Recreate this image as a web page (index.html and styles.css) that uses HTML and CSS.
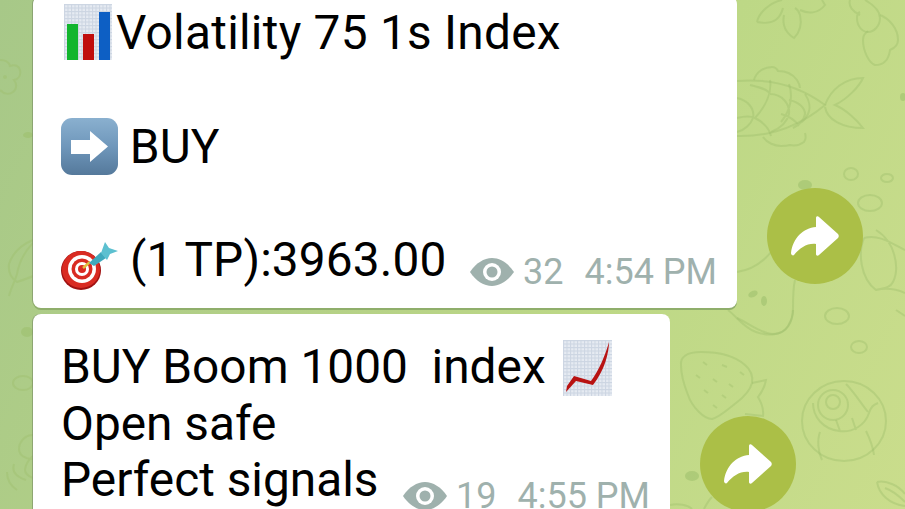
FILE: index.html
```html
<!DOCTYPE html>
<html lang="en">
<head>
  <meta charset="UTF-8">
  <title>Channel</title>
  <link rel="stylesheet" href="styles.css">
</head>
<body>
  <svg class="doodles" width="905" height="509" viewBox="0 0 905 509" fill="none" aria-hidden="true">
    <defs>
      <pattern id="grid" width="3.500" height="3.500" patternUnits="userSpaceOnUse">
        <rect width="3.500" height="3.500" fill="#e6ebf2"/>
        <path d="M0 .5h3.500M.5 0v3.500" stroke="#ccd5e2" stroke-width="1"/>
      </pattern>
      <linearGradient id="blueKey" x1="0" y1="0" x2="0" y2="1">
        <stop offset="0" stop-color="#8ab0cf"/>
        <stop offset=".5" stop-color="#6f97bb"/>
        <stop offset="1" stop-color="#55799b"/>
      </linearGradient>
    </defs>
    <g class="line">
      <!-- top leaves -->
      <path d="M757 22c2-10 14-20 25-22M757 22c10 2 22 2 26-14"/>
      <path d="M784 15c-2 10 2 18 10 23 6-6 8-14 6-23-1-3-3-6-5-7"/>
      <path d="M800 10c8 4 18 4 25-5l-3-5"/>
      <path d="M850 0c-2 6 3 12 10 15M865 0c7 4 15 10 15 18 0 8-6 14-12 14-6 0-11-6-11-14 0-3 1-5 3-6"/>
      <path d="M880 15c10 4 18 14 18 25 0 5-3 8-8 10-1 8-5 15-15 15-6-2-12-14-12-25 0-4 2-7 5-9"/>
      <!-- fish -->
      <path d="M737 81c34-3 64 6 88 24-24 20-54 32-88 31"/>
      <path d="M825 105c6-16 20-27 38-27-4 9-16 21-28 27 10 4 22 15 28 23-20 0-36-8-38-21"/>
      <path d="M754 80c2-8 10-13 18-13 3 0 5 2 6 4 6 0 14 2 19 9 2 3 3 5 3 8"/>
      <path d="M763 137c4 6 12 9 18 9 3 0 6 0 9-1 5 1 10 0 14-3 2-3 2-6 1-9"/>
      <path d="M737 98c10 2 18 10 16 20-2 6-8 12-16 14M737 118c8-2 14-2 18 0 8 4 14 10 16 18M770 80c2 12-4 26-15 38M770 94c12 0 20 10 19 20-2 8-8 14-18 18M750 85c8 2 18 4 20 9M789 84c4 12 2 26-8 38M789 100c10 2 16 8 16 14-1 6-4 10-12 14M805 94c4 6 6 14 3 20-2 4-4 6-6 8M781 114c8 2 14 6 18 12"/>
      <!-- rings and leaves by the first button -->
      <ellipse cx="851" cy="174" rx="7" ry="6"/>
      <ellipse cx="887" cy="178" rx="6" ry="4"/>
      <ellipse cx="870" cy="203" rx="12" ry="8"/>
      <ellipse cx="837" cy="316" rx="12" ry="8"/>
      <ellipse cx="859" cy="347" rx="8" ry="6"/>
      <path d="M737 272c14-2 26-10 34-20"/>
      <path d="M737 318c10 4 24 16 36 16 14 0 20-12 20-26 0-10 0-20 2-28"/>
      <path d="M864 238c16-4 28 6 41 12M864 238c-6 14-4 40 12 52 8-2 14-2 17-8 4-8 4-18 1-28-2-8-8-18-18-24M876 290c8-2 18-2 29 3M896 310l9 6"/>
      <!-- strawberry -->
      <path d="M681 365c-1-8 6-13 20-13 18 0 34 4 44 13 6 5 8 12 7 18-2 8-8 14-16 20-8 6-16 14-24 16-8 0-20-12-24-24-4-10-7-20-7-30z"/>
      <path d="M752 383l14-3c-1 6-4 12-8 17 3 5 6 12 5 19l-18-2"/>
      <path d="M703 362l4 3M722 365l5 2M740 372l4 3M696 375l4 3M713 379l4 3M729 384l4 3M704 390l4 3M722 395l4 3M713 405l4 3"/>
      <path d="M728 310c8 6 16 18 28 22 12 4 26 4 32-6 3-5 5-10 5-16"/>
      <!-- shell -->
      <ellipse cx="844" cy="421" rx="42" ry="40"/>
      <circle cx="833" cy="402" r="7"/>
      <circle cx="833" cy="405" r="15"/>
      <path d="M813 403c0 14 10 26 26 28 14 2 26-6 30-18 2-6 4-8 9-10M846 384c8 8 14 18 22 28M820 432c-3 8-2 20 2 28M866 431c4 8 7 16 8 24M836 420l4 11M852 418l4 12"/>
      <!-- bottom corners -->
      <path d="M877 482c10-2 22 4 28 12M877 482c2 12 12 22 28 24M885 488c6 2 14 8 20 14"/>
      <path d="M670 505c8-2 18 0 22 4M704 509c2-4 4-8 8-12"/>
      <!-- left strip -->
      <path d="M0 60c5 0 9 2 10 6 5-2 9 0 10 4 1 5-1 9-6 10 3 4 3 9-1 12-4 3-9 2-13-2"/>
      <circle cx="5" cy="77" r="1"/>
      <path d="M33 240c-10 4-20 12-24 24-1 8 2 14 8 18 6-2 12-4 16-6M33 243c-8 8-14 20-16 31-2 7-6 14-8 22"/>
      <ellipse cx="23" cy="383" rx="10" ry="7"/>
      <path d="M33 435c-9 0-14 8-14 14 0 6 6 10 14 10M33 456c-5 4-8 10-8 14 0 4 3 6 8 8"/>
      <path d="M14 464c-2 6 0 12 12 16M7 472c0 8 4 14 10 18"/>
    </g>
    <g class="blob">
      <ellipse cx="28" cy="135" rx="5" ry="3"/>
      <ellipse cx="27" cy="332" rx="6" ry="5"/>
      <ellipse cx="903" cy="97" rx="3" ry="4"/>
      <ellipse cx="805" cy="185" rx="7" ry="5"/>
      <ellipse cx="753" cy="294" rx="5" ry="3" transform="rotate(-25 753 294)"/>
      <ellipse cx="764" cy="301" rx="3" ry="5"/>
      <ellipse cx="692" cy="476" rx="7" ry="5"/>
    </g>
  </svg>

  <main class="chat">
    <div class="row">
      <article class="bubble bubble-signal">
        <p class="line-text line-wide"><svg class="emoji emoji-chart" viewBox="0 0 48 56">
          <rect width="48" height="56" fill="url(#grid)"/>
          <rect x="3" y="20" width="11" height="36" fill="#12b52e"/>
          <rect x="19" y="30" width="11" height="26" fill="#c00d0d"/>
          <rect x="35" y="8" width="11" height="48" fill="#0d5fc4"/>
        </svg>Volatility 75 1s Index</p>
        <p class="line-text">&nbsp;</p>
        <p class="line-text"><svg class="emoji emoji-arrow" viewBox="0 0 57 57">
          <rect width="57" height="57" rx="11" fill="url(#blueKey)"/>
          <path d="M10 22h19v-9l18 15.500L29 44v-8H10z" fill="#fff"/>
        </svg> BUY</p>
        <p class="line-text">&nbsp;</p>
        <div class="foot">
          <p class="line-text line-target"><svg class="emoji emoji-dart" viewBox="0 0 57 48">
            <ellipse cx="20" cy="28.500" rx="20" ry="19.500" fill="#a01212"/>
            <ellipse cx="20" cy="27.500" rx="19" ry="18.500" fill="#d92b22"/>
            <circle cx="21" cy="27" r="14" fill="#fff"/>
            <circle cx="21" cy="27" r="10.500" fill="#d92b22"/>
            <circle cx="21" cy="27" r="7" fill="#fff"/>
            <circle cx="21" cy="27" r="4" fill="#d92b22"/>
            <path d="M22 26l7-6" stroke="#e0c040" stroke-width="2.500"/>
            <path d="M28 21l12-11 5 6-12 8z" fill="#3fa9bd"/>
            <path d="M40 11l4-11 4 6 9 3-8 3-3 6z" fill="#5cc0d0"/>
          </svg> (1 TP):3963.00</p>
          <div class="meta">
            <svg class="eye" viewBox="0 0 44 28"><path d="M0 14C6 5 14 0 22 0s16 5 22 14c-6 9-14 14-22 14S6 23 0 14z" fill="currentColor"/><circle cx="22" cy="14" r="9" fill="#fff"/><circle cx="22" cy="14" r="5.500" fill="currentColor"/></svg>
            <span class="views">32</span>
            <span>4:54 PM</span>
          </div>
        </div>
      </article>
      <button class="share" aria-label="Forward"><svg viewBox="0 0 48 40"><path d="M25 2c0-2 2-2 3-1l19 17c1 1 1 3 0 4L28 39c-1 1-3 1-3-1V28C16 27 9 32 3 39c-1 1-3 0-3-2C2 22 12 12 25 11z" fill="#fff"/></svg></button>
    </div>
    <div class="row">
      <article class="bubble bubble-boom">
        <p class="line-text">BUY Boom 1000&nbsp; index <svg class="emoji emoji-graph" viewBox="0 0 49 56">
          <rect width="49" height="56" fill="url(#grid)"/>
          <path d="M3 52l1-6 7-10 17 5C36 30 42 16 46 2c0 10-4 28-16 43l-17-4z" fill="#b81212"/>
        </svg></p>
        <p class="line-text">Open safe</p>
        <div class="foot">
          <p class="line-text">Perfect signals</p>
          <div class="meta">
            <svg class="eye" viewBox="0 0 44 28"><path d="M0 14C6 5 14 0 22 0s16 5 22 14c-6 9-14 14-22 14S6 23 0 14z" fill="currentColor"/><circle cx="22" cy="14" r="9" fill="#fff"/><circle cx="22" cy="14" r="5.500" fill="currentColor"/></svg>
            <span class="views">19</span>
            <span>4:55 PM</span>
          </div>
        </div>
      </article>
      <button class="share" aria-label="Forward"><svg viewBox="0 0 48 40"><path d="M25 2c0-2 2-2 3-1l19 17c1 1 1 3 0 4L28 39c-1 1-3 1-3-1V28C16 27 9 32 3 39c-1 1-3 0-3-2C2 22 12 12 25 11z" fill="#fff"/></svg></button>
    </div>
  </main>
</body>
</html>
```

FILE: styles.css
```css
* {
  box-sizing: border-box;
}

html, body {
  height: 100%;
}

body {
  margin: 0;
  overflow: hidden;
  position: relative;
  font-family: Roboto, "Liberation Sans", sans-serif;
  background: linear-gradient(115deg, #a7c888 0%, #b6d286 45%, #bdd886 65%, #cadd8c 100%);
}

.doodles {
  position: absolute;
  top: 0;
  left: 0;
}

.doodles .line {
  stroke: #9dbf6c;
  stroke-opacity: 0.4;
  stroke-width: 2;
}

.doodles .blob {
  fill: #9dbf6c;
  fill-opacity: 0.55;
}

.chat {
  position: relative;
  display: flex;
  flex-direction: column;
  gap: 6px;
  height: 513px;
  overflow: hidden;
  padding-left: 33px;
  margin-top: -4px;
}

.row {
  flex: none;
  display: flex;
  align-items: flex-end;
  gap: 30px;
}

.bubble {
  background-color: #fff;
  border-radius: 8px;
  box-shadow: 0 2px 0 #8fae6b, -1px 0 0 rgba(120, 140, 100, 0.6);
  padding: 9px 20px 19px 28px;
  color: #000;
  font-size: 47.8px;
  line-height: 56.75px;
}

.bubble-signal {
  width: 704px;
}

.bubble-boom {
  width: 637px;
  padding-top: 25px;
  padding-bottom: 27px;
}

.line-text {
  margin: 0;
  white-space: nowrap;
}

.line-wide {
  letter-spacing: 0.25px;
}

.line-target {
  letter-spacing: 0.12px;
}

.foot {
  display: flex;
  justify-content: space-between;
  align-items: flex-end;
}

.meta {
  display: flex;
  align-items: center;
  font-size: 36px;
  line-height: 40px;
  color: #9fb1ad;
  margin-bottom: -3px;
}

.bubble-boom .meta {
  margin-bottom: -7px;
}

.eye {
  width: 44px;
  height: 28px;
  margin-right: 9px;
}

.views {
  margin-right: 21px;
}

.emoji {
  margin-top: -12px;
  margin-bottom: -12px;
}

.emoji-chart {
  width: 48px;
  height: 56px;
  margin-left: 3px;
  margin-right: 4px;
  vertical-align: 1px;
}

.emoji-arrow {
  width: 57px;
  height: 57px;
  vertical-align: 0;
}

.emoji-dart {
  width: 57px;
  height: 48px;
  vertical-align: -2px;
}

.emoji-graph {
  width: 49px;
  height: 56px;
  margin-left: 6px;
  vertical-align: -1px;
}

.share {
  flex: none;
  width: 96px;
  height: 96px;
  margin-bottom: 24px;
  padding: 0;
  border: none;
  border-radius: 50%;
  background-color: #abbf47;
  display: flex;
  align-items: center;
  justify-content: center;
}

.share svg {
  width: 48px;
  height: 40px;
}
```
